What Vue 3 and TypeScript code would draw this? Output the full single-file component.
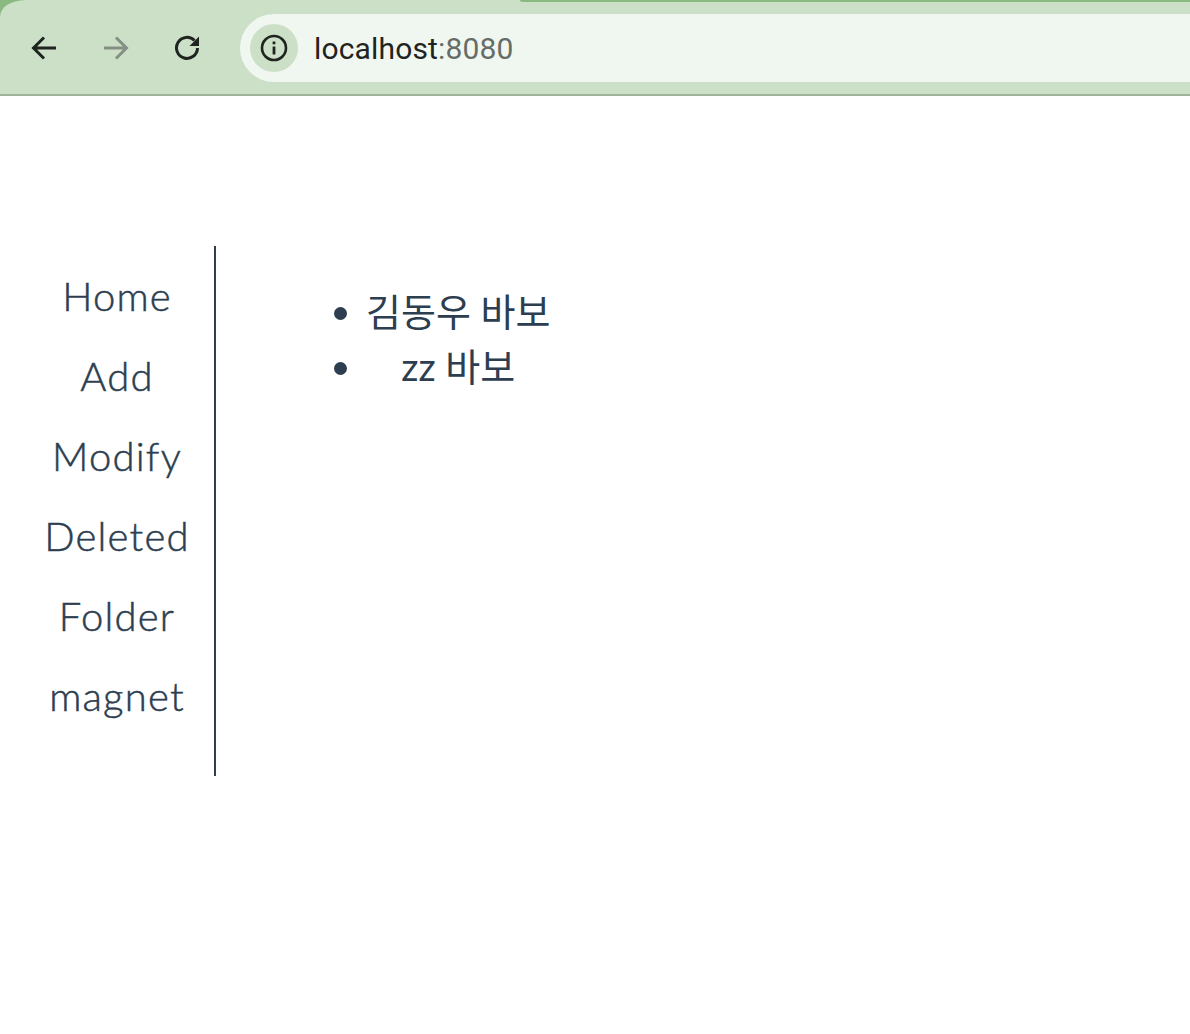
<script setup lang="ts">
const links = ['Home', 'Add', 'Modify', 'Deleted', 'Folder', 'magnet']
const items = ['김동우 바보', 'zz 바보']
</script>

<template>
  <div class="page">
    <header class="chrome">
      <span class="tab-corner"></span>
      <span class="tab-strip"></span>
      <div class="nav-buttons">
        <button class="icon-btn">
          <svg width="28" height="28" viewBox="0 0 28 28" fill="none" stroke="#1f2420" stroke-width="3">
            <path d="M26 14H4M14 3.5 3.5 14 14 24.5" />
          </svg>
        </button>
        <button class="icon-btn">
          <svg width="28" height="28" viewBox="0 0 28 28" fill="none" stroke="#858f84" stroke-width="3">
            <path d="M2 14h22M14 3.5 24.5 14 14 24.5" />
          </svg>
        </button>
        <button class="icon-btn">
          <svg width="28" height="28" viewBox="0 0 28 28" fill="none">
            <path d="M23.5 14A10.5 10.5 0 1 1 20.5 6.5" stroke="#1f2420" stroke-width="3" />
            <path d="M25 2.5V12H15.5Z" fill="#1f2420" />
          </svg>
        </button>
      </div>
      <div class="address">
        <span class="site-info">
          <svg width="28" height="28" viewBox="0 0 28 28" fill="none" stroke="#1f2420">
            <circle cx="14" cy="14" r="12" stroke-width="2.6" />
            <path d="M14 12.5V20.5" stroke-width="2.8" />
            <path d="M14 7.5v2.8" stroke-width="2.8" />
          </svg>
        </span>
        <span class="url">localhost<span class="port">:8080</span></span>
      </div>
    </header>

    <main class="content">
      <nav class="side">
        <a v-for="link in links" :key="link" class="side-link">{{ link }}</a>
      </nav>
      <section class="body">
        <ul class="list">
          <li v-for="item in items" :key="item">{{ item }}</li>
        </ul>
      </section>
    </main>
  </div>
</template>

<style>
html,
body {
  margin: 0;
  background: #fff;
}
</style>

<style scoped>
.page {
  height: 1034px;
  overflow: hidden;
  color: #2c3e50;
  font-family: Lato, 'Noto Sans CJK KR', sans-serif;
}
.chrome {
  position: relative;
  display: flex;
  align-items: center;
  gap: 20px;
  box-sizing: border-box;
  height: 96px;
  padding: 2px 0 0 12px;
  background: #cce0c7;
  border-bottom: 2px solid #a0b39c;
}
.tab-corner {
  position: absolute;
  top: 0;
  left: 0;
  width: 26px;
  height: 17px;
  background: #8ab981;
  clip-path: path('M0 0H26C10 1 1 6 0 17Z');
}
.tab-strip {
  position: absolute;
  top: 0;
  left: 520px;
  right: 0;
  height: 2px;
  background: #8ab981;
  border-bottom-left-radius: 4px;
}
.nav-buttons {
  display: flex;
  gap: 8px;
}
.icon-btn {
  display: flex;
  align-items: center;
  justify-content: center;
  width: 64px;
  height: 64px;
  padding: 0;
  background: none;
  border: 0;
}
.address {
  display: flex;
  flex: 1;
  align-items: center;
  gap: 16px;
  height: 68px;
  padding-left: 10px;
  background: #f0f7f1;
  border-radius: 34px 0 0 34px;
}
.site-info {
  display: flex;
  align-items: center;
  justify-content: center;
  width: 48px;
  height: 48px;
  background: #cce0c7;
  border-radius: 50%;
}
.url {
  color: #1f2420;
  font-family: Roboto, sans-serif;
  font-size: 30px;
  letter-spacing: 0.15px;
}
.port {
  color: #666c66;
}
.content {
  display: flex;
  padding-top: 150px;
}
.side {
  display: flex;
  flex-direction: column;
  box-sizing: border-box;
  width: 216px;
  height: 530px;
  padding: 10px 0 0 20px;
  border-right: 2px solid #2c3e50;
}
.side-link {
  height: 80px;
  line-height: 80px;
  font-size: 40px;
  font-weight: 300;
  letter-spacing: 1.2px;
  text-align: center;
  -webkit-text-stroke: 0.5px #2c3e50;
}
.body {
  padding: 38px 0 0 114px;
}
.list {
  display: inline-block;
  margin: 0;
  padding: 0 0 0 36px;
  font-size: 38px;
  font-weight: 400;
  line-height: 55px;
  text-align: center;
}
</style>
